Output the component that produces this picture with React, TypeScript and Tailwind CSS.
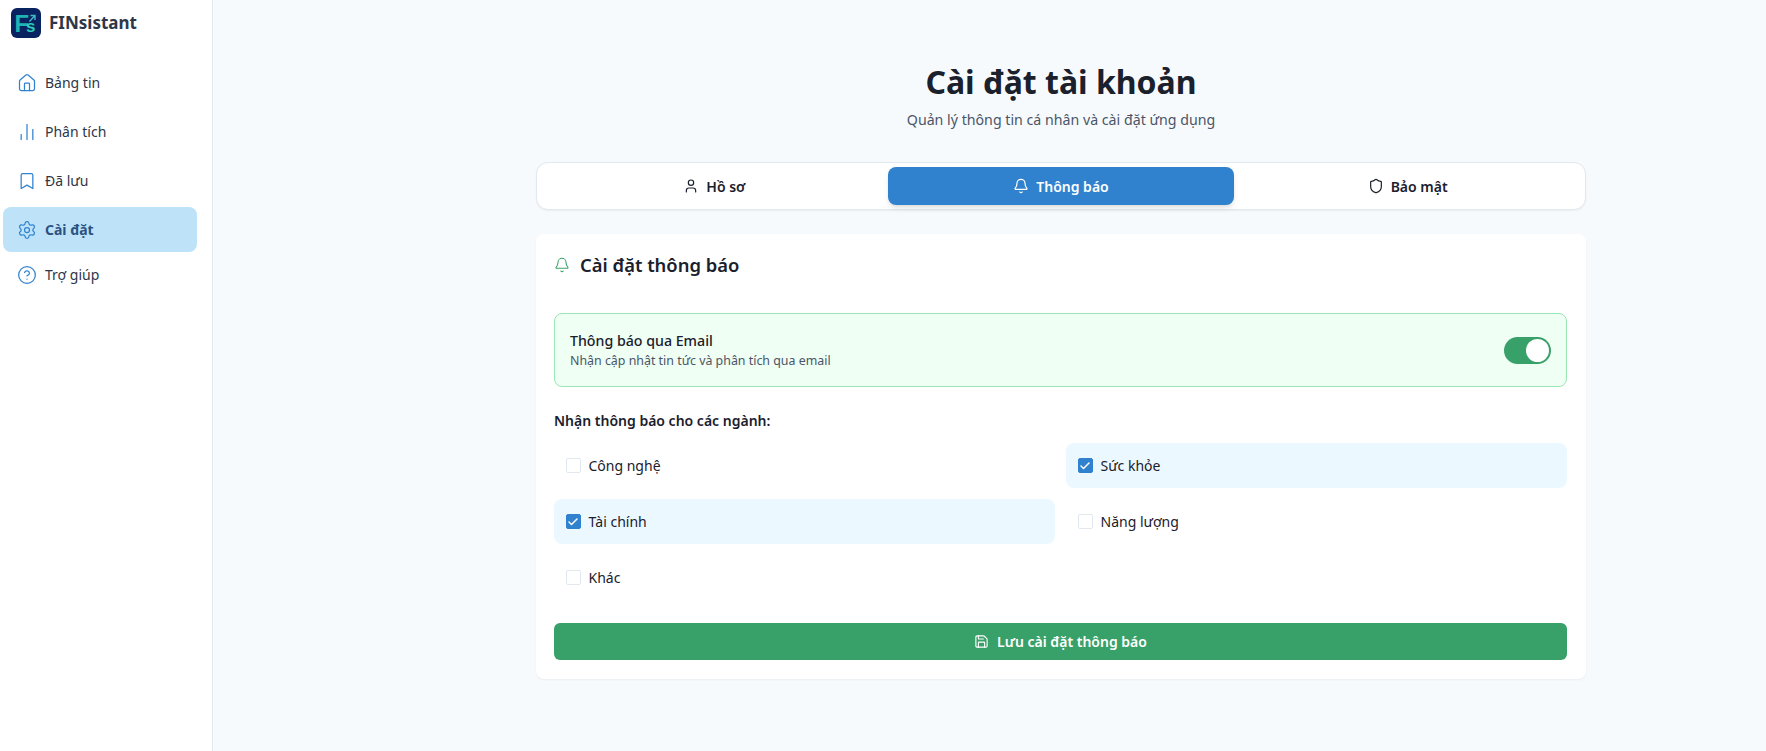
import { Bell, Bookmark, ChartNoAxesColumn, Check, CircleHelp, House, Save, Settings, Shield, User } from "lucide-react";

const nav = [
  { label: "Bảng tin", icon: House },
  { label: "Phân tích", icon: ChartNoAxesColumn },
  { label: "Đã lưu", icon: Bookmark },
  { label: "Cài đặt", icon: Settings, active: true },
  { label: "Trợ giúp", icon: CircleHelp, last: true },
];

const tabs = [
  { label: "Hồ sơ", icon: User },
  { label: "Thông báo", icon: Bell, active: true },
  { label: "Bảo mật", icon: Shield },
];

const sectors = [
  { label: "Công nghệ", checked: false },
  { label: "Sức khỏe", checked: true },
  { label: "Tài chính", checked: true },
  { label: "Năng lượng", checked: false },
  { label: "Khác", checked: false },
];

function Logo() {
  return (
    <svg width="30" height="30" viewBox="0 0 30 30" className="shrink-0">
      <rect width="30" height="30" rx="6" fill="#08235f" />
      <text x="3.4" y="24" fontFamily="Liberation Sans" fontWeight="700" fontSize="24" fill="#1fb3b4">F</text>
      <text x="15" y="24" fontFamily="Liberation Sans" fontWeight="700" fontSize="17" fill="#2cc9b8">s</text>
      <path d="M18.5 13.5l5-5.5M19.5 7.5H24V12" fill="none" stroke="#3fb8c8" strokeWidth="1.4" />
    </svg>
  );
}

function Sidebar() {
  return (
    <aside className="flex w-[213px] shrink-0 flex-col border-r border-[#e2e8f0] bg-white">
      <div className="flex h-[60px] items-start gap-2 pl-[11px] pt-2">
        <Logo />
        <span className="text-[17px] leading-[30px] font-bold text-[#2d3748]">FINsistant</span>
      </div>
      <nav className="flex flex-col gap-1 pl-[3px] pr-[15px]">
        {nav.map((item) => (
          <a
            key={item.label}
            className={`flex h-[45px] items-center gap-2 rounded-lg pl-[14px] text-[14px] ${
              item.active ? "bg-[#bee3f8] font-bold text-[#2c5282]" : "text-[#2d3748]"
            } ${item.last ? "-mt-[4px]" : ""}`}
          >
            <item.icon size={20} strokeWidth={1.5} className="text-[#3182ce]" />
            {item.label}
          </a>
        ))}
      </nav>
    </aside>
  );
}

function Tabs() {
  return (
    <div className="mt-[30px] grid h-[48px] grid-cols-3 rounded-xl border border-[#e2e8f0] bg-white p-1 shadow-xs">
      {tabs.map((tab) => (
        <button
          key={tab.label}
          className={`flex items-center justify-center gap-[7px] rounded-lg text-[14px] font-semibold ${
            tab.active ? "bg-[#3182ce] text-white shadow-md" : "text-[#1a202c]"
          }`}
        >
          <tab.icon size={16} strokeWidth={1.8} />
          {tab.label}
        </button>
      ))}
    </div>
  );
}

function NotificationCard() {
  return (
    <section className="mt-6 rounded-lg bg-white pb-[19px] pl-[18px] pr-[19px] shadow-xs">
      <div className="flex h-[79px] items-start gap-[10px] pt-[17px]">
        <Bell size={16} strokeWidth={1.6} className="mt-[6px] text-[#38a169]" />
        <h2 className="text-[18.4px] leading-7 font-semibold text-[#1a202c]">Cài đặt thông báo</h2>
      </div>
      <div className="flex h-[74px] items-center justify-between rounded-lg border border-[#9ae6b4] bg-[#f0fff4] px-[15px]">
        <div>
          <p className="text-[14.2px] leading-5 font-medium text-[#1a202c]">Thông báo qua Email</p>
          <p className="mt-[1px] text-[12.4px] leading-[18px] text-[#4a5568]">Nhận cập nhật tin tức và phân tích qua email</p>
        </div>
        <div className="flex h-[27px] w-[47px] items-center justify-end rounded-full bg-[#38a169] pr-[2px]">
          <div className="h-[23px] w-[23px] rounded-full bg-white" />
        </div>
      </div>
      <p className="mt-[24px] text-[14px] leading-5 font-semibold text-[#1a202c]">Nhận thông báo cho các ngành:</p>
      <div className="mt-[12px] grid grid-cols-2 gap-[11px]">
        {sectors.map((s) => (
          <label
            key={s.label}
            className={`flex h-[45px] items-center gap-2 rounded-lg pl-[11.5px] text-[14px] text-[#1a202c] ${
              s.checked ? "bg-[#ebf8ff]" : ""
            }`}
          >
            <span
              className={`flex h-[15px] w-[15px] items-center justify-center rounded-[2px] border ${
                s.checked ? "border-[#3182ce] bg-[#3182ce]" : "border-[#e2e8f0] bg-white"
              }`}
            >
              {s.checked && <Check size={12} strokeWidth={3} className="text-white" />}
            </span>
            {s.label}
          </label>
        ))}
      </div>
      <button className="mt-[23px] flex h-[37px] w-full items-center justify-center gap-2 rounded-md bg-[#38a169] text-[14px] font-semibold text-white">
        <Save size={15} strokeWidth={1.8} />
        Lưu cài đặt thông báo
      </button>
    </section>
  );
}

export default function App() {
  return (
    <div className="flex h-[751px] overflow-hidden bg-[#f7fafc] font-['Noto_Sans',sans-serif]">
      <Sidebar />
      <main className="ml-[323px] w-[1050px] shrink-0 pt-[60px]">
        <h1 className="text-center text-[32px] leading-[44px] font-bold text-[#1a202c]">Cài đặt tài khoản</h1>
        <p className="mt-[4px] text-center text-[14.2px] leading-[24px] text-[#4a5568]">
          Quản lý thông tin cá nhân và cài đặt ứng dụng
        </p>
        <Tabs />
        <NotificationCard />
      </main>
    </div>
  );
}
